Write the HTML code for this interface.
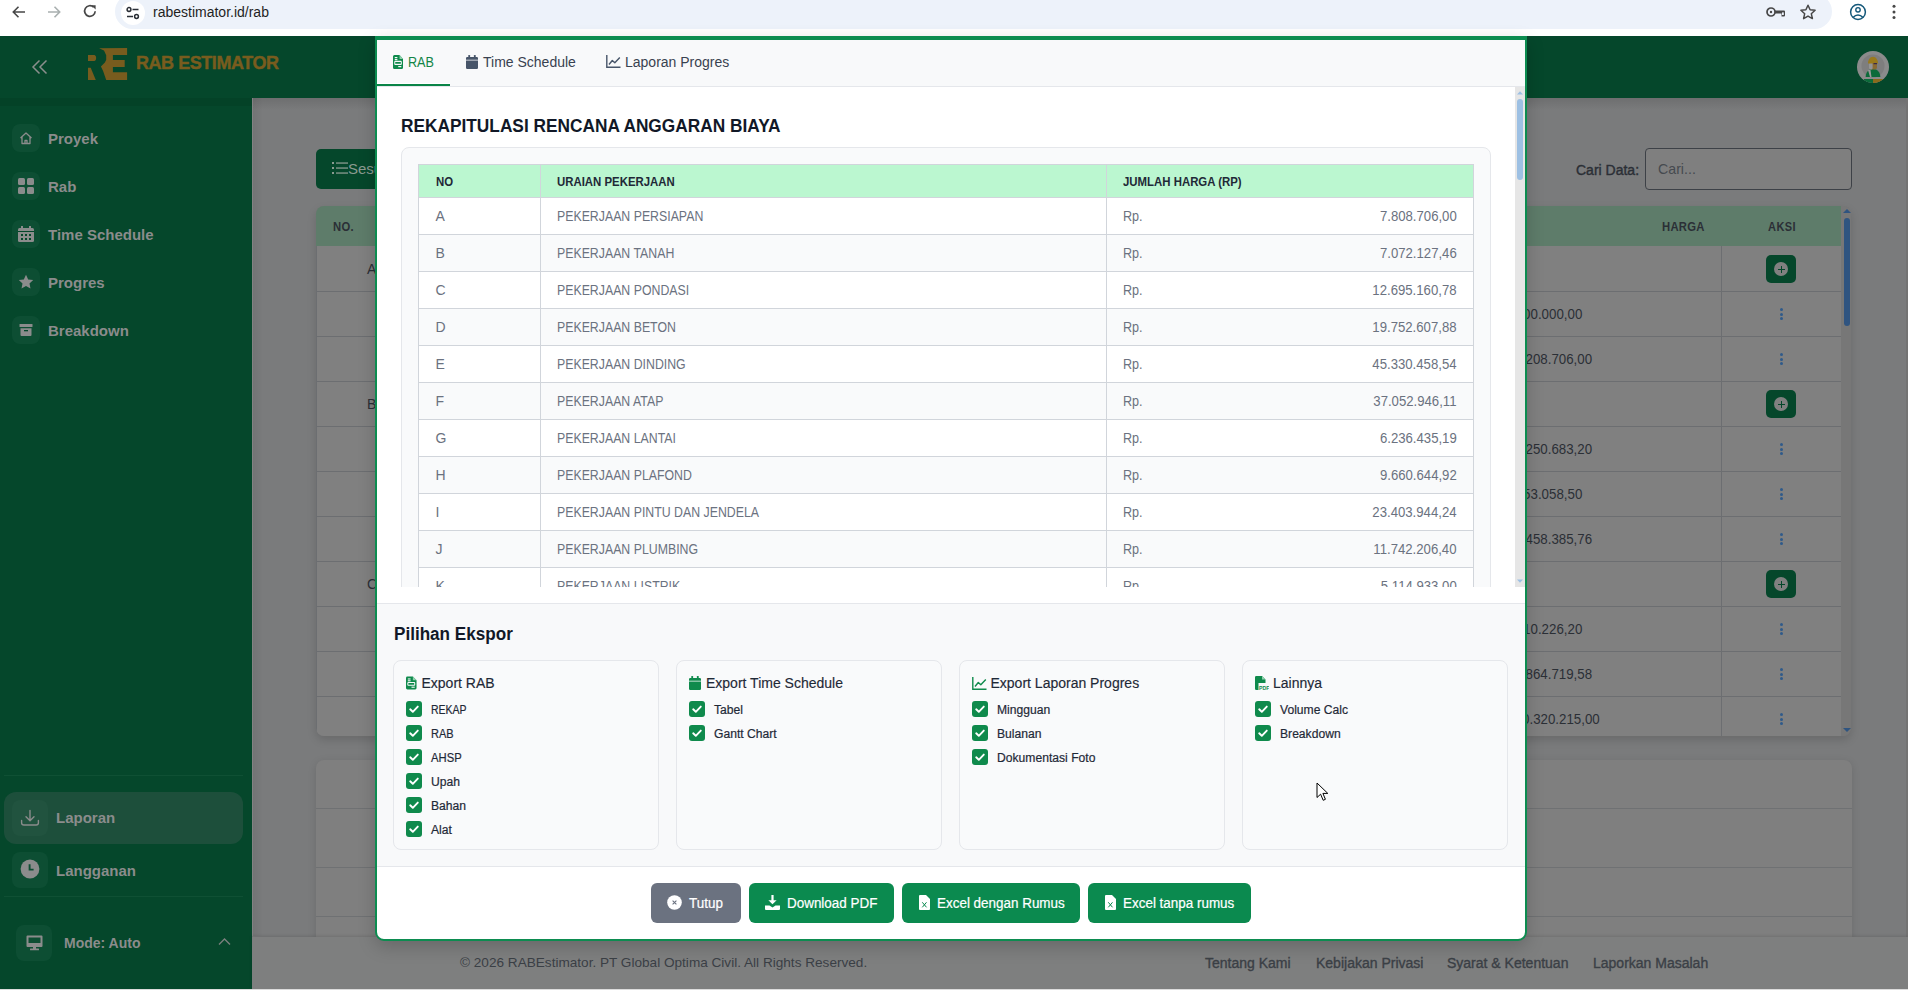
<!DOCTYPE html><html><head><meta charset="utf-8"><style>
*{box-sizing:border-box;margin:0;padding:0}
html,body{width:1908px;height:990px;overflow:hidden;font-family:"Liberation Sans",sans-serif;background:#7a7b7c}
.a{position:absolute}
.nw{white-space:nowrap}
svg{display:block}
/* sidebar */
.ib{position:absolute;width:28px;height:28px;border-radius:8px;background:#0d4e33}
.nt{position:absolute;font-size:15px;line-height:15px;font-weight:bold;color:#8b8c8c;white-space:nowrap}
/* bg table */
.brow{position:absolute;left:317px;width:1524px;height:45px;border-bottom:1px solid #6c6e71;background:#808080}
.bval{position:absolute;font-size:14px;line-height:14px;color:#2b2f36;white-space:nowrap;text-align:right}
.dots{position:absolute;left:1780px;width:3px}
.dots i{display:block;width:3px;height:3px;border-radius:2px;background:#2f5a8a;margin-bottom:1.6px}
.plus{position:absolute;left:1766px;width:30px;height:28px;border-radius:5px;background:#05472b}
.plus b{position:absolute;left:8px;top:7px;width:14px;height:14px;border-radius:7px;background:#808080}
.plus b:before{content:"";position:absolute;left:6.5px;top:3.5px;width:1px;height:7px;background:#05472b}
.plus b:after{content:"";position:absolute;left:3.5px;top:6.5px;width:7px;height:1px;background:#05472b}
/* modal */
#modal{left:375px;top:36px;width:1152px;height:905px;background:#fff;border:2px solid #0c8c50;border-top-width:4px;border-radius:0 0 9px 9px;overflow:hidden}
</style></head><body>
<div class="a" style="left:0;top:0;width:1908px;height:36px;background:#fff"></div>
<div class="a" style="left:115px;top:-6px;width:1717px;height:35px;border-radius:18px;background:#edf2fa"></div>
<div class="a" style="left:121px;top:1px;width:24px;height:24px;border-radius:12px;background:#fff"></div>
<div class="a nw" style="left:153px;top:4px;font-size:14px;line-height:16px;color:#1f1f1f">rabestimator.id/rab</div>

<svg class="a" style="left:8.5px;top:2px" width="20" height="20" viewBox="0 0 20 20"><path d="M16 10H4.5M9.5 4.8L4.3 10l5.2 5.2" fill="none" stroke="#474747" stroke-width="1.6"/></svg>
<svg class="a" style="left:44px;top:2px" width="20" height="20" viewBox="0 0 20 20"><path d="M4 10h11.5M10.5 4.8l5.2 5.2-5.2 5.2" fill="none" stroke="#a9b0b0" stroke-width="1.6"/></svg>
<svg class="a" style="left:80px;top:1px" width="20" height="20" viewBox="0 0 20 20"><path d="M15.2 10.3A5.3 5.3 0 1 1 13.6 6.2" fill="none" stroke="#474747" stroke-width="1.7"/><path d="M11.2 4.2h4.4v4.4z" fill="#474747"/></svg>
<svg class="a" style="left:125px;top:5px" width="16" height="16" viewBox="0 0 16 16"><circle cx="4" cy="4.5" r="1.9" fill="none" stroke="#2a2f36" stroke-width="1.5"/><path d="M7.5 4.5h6M2 11.5h6" stroke="#2a2f36" stroke-width="1.5"/><circle cx="11.5" cy="11.5" r="1.9" fill="none" stroke="#2a2f36" stroke-width="1.5"/></svg>

<svg class="a" style="left:1766px;top:6px" width="20" height="12" viewBox="0 0 20 12"><circle cx="5" cy="6" r="4" fill="none" stroke="#474747" stroke-width="1.7"/><circle cx="5" cy="6" r="1.2" fill="#474747"/><path d="M9 4.6H18A1 1 0 0 1 19 5.6V9.5A1 1 0 0 1 18 10.5H15.5V7.4H9Z" fill="#474747"/><rect x="16" y="6.4" width="1.8" height="2.6" fill="#edf2fa"/></svg>
<svg class="a" style="left:1799px;top:4px" width="18" height="16" viewBox="0 0 18 16"><path d="M9 1.2l2.1 4.6 5 .5-3.8 3.4 1.1 4.9L9 12.1l-4.4 2.5 1.1-4.9L1.9 6.3l5-.5z" fill="none" stroke="#474747" stroke-width="1.5" stroke-linejoin="round"/></svg>
<svg class="a" style="left:1849px;top:3px" width="18" height="18" viewBox="0 0 18 18"><circle cx="9" cy="9" r="7.4" fill="none" stroke="#14587a" stroke-width="1.5"/><circle cx="9" cy="6.8" r="2.2" fill="none" stroke="#14587a" stroke-width="1.4"/><path d="M4.3 14.3c1.3-1.6 2.8-2.3 4.7-2.3s3.4.7 4.7 2.3" fill="none" stroke="#14587a" stroke-width="1.4"/></svg>
<svg class="a" style="left:1891px;top:3px" width="6" height="18" viewBox="0 0 6 18"><circle cx="3" cy="3.2" r="1.5" fill="#474747"/><circle cx="3" cy="9" r="1.5" fill="#474747"/><circle cx="3" cy="14.5" r="1.5" fill="#474747"/></svg>

<div class="a" style="left:0;top:36px;width:1908px;height:62px;background:#05472b"></div>
<svg class="a" style="left:30px;top:57px" width="20" height="20" viewBox="0 0 20 20"><path d="M9.5 3.5L3 10l6.5 6.5M16.5 3.5L10 10l6.5 6.5" fill="none" stroke="#8b8f8d" stroke-width="1.5"/></svg>
<svg class="a" style="left:80px;top:42px" width="55" height="44" viewBox="80 42 55 44">
<path d="M99.1 48.2L127.1 48V55.1H112.9V60H124.7V66.9H112.9V72.2H127.1V80H106.2L103.1 70.9L100.9 66.4L104.9 62.4L106.2 59.8V55.3L104 50.4Z" fill="#785c1e"/>
<path d="M88 55H94.5Q96.2 55.4 96.2 58Q96.2 60.6 94.5 61H88Z" fill="#785c1e"/>
<path d="M88 67.8H90.7L95.8 80H88Z" fill="#785c1e"/>
</svg>
<div class="a nw" style="left:136px;top:53px;font-size:18px;line-height:20px;font-weight:bold;color:#785c1e;letter-spacing:-0.45px;-webkit-text-stroke:.45px #785c1e">RAB ESTIMATOR</div>
<svg class="a" style="left:1856px;top:50px" width="34" height="34" viewBox="0 0 34 34">
<defs><clipPath id="avc"><circle cx="17" cy="17" r="16"/></clipPath></defs>
<circle cx="17" cy="17" r="16" fill="#8b8b8b"/><circle cx="17" cy="16" r="11.5" fill="#7e7e7e"/>
<g clip-path="url(#avc)">
<path d="M9.6 27c.3-5 2.8-8 7.4-8s7 3 7.4 8z" fill="#0b6b3a"/>
<path d="M12 20l2 7h1.5l-1-7z" fill="#9a9a9a"/>
<rect x="13" y="12.5" width="8" height="7" rx="2.5" fill="#8a6a34"/>
<rect x="13" y="12.5" width="3.6" height="7" rx="1.5" fill="#949494"/>
<path d="M12 13.5c0-4 2.2-6.8 5-6.8s5 2.8 5 6.8z" fill="#9a7a1c"/>
<rect x="17.5" y="13" width="3.5" height="1.2" fill="#3a2a4a"/>
<path d="M8 29h9v5H8z" fill="#0b6b3a"/><path d="M17 29h10v5H17z" fill="#8a6a1c"/>
</g>
</svg>
<div class="a" style="left:0;top:98px;width:252px;height:892px;background:#05472b"></div>
<div class="a" style="left:0;top:98px;width:252px;height:8px;background:rgba(0,0,0,.07)"></div>
<div class="a" style="left:252px;top:98px;width:1656px;height:12px;background:linear-gradient(rgba(0,0,0,.10),rgba(0,0,0,0))"></div>
<div class="a" style="left:253px;top:98px;width:10px;height:838px;background:linear-gradient(90deg,rgba(0,0,0,.06),rgba(0,0,0,0))"></div>
<div class="a" style="left:252px;top:98px;width:1px;height:838px;background:#838383"></div>
<div class="ib" style="left:12px;top:124px"></div>
<svg class="a" style="left:18px;top:130px" width="16" height="16" viewBox="0 0 16 16"><path d="M2.5 8L8 3l5.5 5M4 7v6.5h8V7M7 13.5v-3h2v3" fill="none" stroke="#8b8c8c" stroke-width="1.3" stroke-linejoin="round"/></svg>
<div class="nt" style="left:48px;top:131px">Proyek</div>
<div class="ib" style="left:12px;top:172px"></div>
<svg class="a" style="left:18px;top:178px" width="16" height="16" viewBox="0 0 16 16"><rect x="0" y="0" width="7" height="7" rx="1.5" fill="#8b8c8c"/><rect x="9" y="0" width="7" height="7" rx="1.5" fill="#8b8c8c"/><rect x="0" y="9" width="7" height="7" rx="1.5" fill="#8b8c8c"/><rect x="9" y="9" width="7" height="7" rx="1.5" fill="#8b8c8c"/></svg>
<div class="nt" style="left:48px;top:179px">Rab</div>
<div class="ib" style="left:12px;top:220px"></div>
<svg class="a" style="left:18px;top:226px" width="16" height="16" viewBox="0 0 16 16"><rect x="0" y="2" width="16" height="14" rx="1.5" fill="#8b8c8c"/><rect x="3" y="0" width="2" height="4" fill="#8b8c8c"/><rect x="11" y="0" width="2" height="4" fill="#8b8c8c"/><path d="M0 5.5h16" stroke="#05472b" stroke-width="1"/><g fill="#05472b"><rect x="3" y="8" width="2" height="2"/><rect x="7" y="8" width="2" height="2"/><rect x="11" y="8" width="2" height="2"/><rect x="3" y="12" width="2" height="2"/><rect x="7" y="12" width="2" height="2"/><rect x="11" y="12" width="2" height="2"/></g></svg>
<div class="nt" style="left:48px;top:227px">Time Schedule</div>
<div class="ib" style="left:12px;top:268px"></div>
<svg class="a" style="left:18px;top:274px" width="16" height="16" viewBox="0 0 16 16"><path d="M8 .8l2.2 4.6 5 .6-3.7 3.4 1 5L8 11.9l-4.5 2.5 1-5L.8 6l5-.6z" fill="#8b8c8c"/></svg>
<div class="nt" style="left:48px;top:275px">Progres</div>
<div class="ib" style="left:12px;top:316px"></div>
<svg class="a" style="left:18px;top:322px" width="16" height="16" viewBox="0 0 16 16"><rect x="1.5" y="2" width="13" height="3" rx=".5" fill="#8b8c8c"/><path d="M2.5 6.2h11V13a1 1 0 0 1-1 1h-9a1 1 0 0 1-1-1z" fill="#8b8c8c"/><rect x="6" y="8" width="4" height="1.3" fill="#05472b"/></svg>
<div class="nt" style="left:48px;top:323px">Breakdown</div>
<div class="a" style="left:4px;top:775px;width:239px;height:1px;background:#0f5034"></div>
<div class="a" style="left:4px;top:792px;width:239px;height:52px;border-radius:12px;background:#1d4f3b"></div>
<div class="a" style="left:12px;top:800px;width:36px;height:36px;border-radius:8px;background:#21533f"></div>
<svg class="a" style="left:20px;top:809px" width="20" height="18" viewBox="0 0 20 18"><path d="M10 1.5v10M6 7.8l4 4 4-4M1.6 11.5v2.2a2.3 2.3 0 0 0 2.3 2.3h12.2a2.3 2.3 0 0 0 2.3-2.3v-2.2" fill="none" stroke="#8b8c8c" stroke-width="1.4" stroke-linecap="round" stroke-linejoin="round"/></svg>
<div class="nt" style="left:56px;top:810.3px">Laporan</div>
<div class="a" style="left:12px;top:852px;width:36px;height:36px;border-radius:8px;background:#0d4e33"></div>
<svg class="a" style="left:20px;top:859px" width="20" height="20" viewBox="0 0 20 20"><circle cx="10" cy="10" r="9.4" fill="#8b8c8c"/><path d="M9.6 5.2v5.4h4" fill="none" stroke="#0d4e33" stroke-width="1.9"/></svg>
<div class="nt" style="left:56px;top:863px">Langganan</div>
<div class="a" style="left:4px;top:896px;width:239px;height:1px;background:#0f5034"></div>
<div class="a" style="left:16px;top:925px;width:36px;height:36px;border-radius:8px;background:#0d4e33"></div>
<svg class="a" style="left:26px;top:935px" width="17" height="16" viewBox="0 0 17 16"><path d="M1.5 .5H15.5A1 1 0 0 1 16.5 1.5V11A1 1 0 0 1 15.5 12H1.5A1 1 0 0 1 .5 11V1.5A1 1 0 0 1 1.5 .5ZM2.5 2.5V8H14.5V2.5Z" fill="#8b8c8c" fill-rule="evenodd"/><rect x="7" y="12" width="3" height="2" fill="#8b8c8c"/><rect x="4" y="13.5" width="9" height="1.8" rx=".5" fill="#8b8c8c"/></svg>
<div class="nt" style="left:64px;top:936px;font-size:14px;line-height:14px">Mode: Auto</div>
<svg class="a" style="left:218px;top:937px" width="13" height="9" viewBox="0 0 13 9"><path d="M1 7.5L6.5 2 12 7.5" fill="none" stroke="#7c807e" stroke-width="1.4"/></svg>
<div class="a" style="left:316px;top:149px;width:120px;height:40px;border-radius:5px;background:#05472b"></div>
<svg class="a" style="left:332px;top:161px" width="16" height="14" viewBox="0 0 16 14"><g fill="#8a9a90"><rect x="0" y="1" width="2" height="2"/><rect x="0" y="6" width="2" height="2"/><rect x="0" y="11" width="2" height="2"/><rect x="4" y="1.4" width="12" height="1.3"/><rect x="4" y="6.4" width="12" height="1.3"/><rect x="4" y="11.4" width="12" height="1.3"/></g></svg>
<div class="a nw" style="left:348px;top:161px;font-size:15px;line-height:16px;color:#8a9a90">Sesuaikan</div>
<div class="a nw" style="left:1576px;top:161.5px;font-size:14px;line-height:16px;color:#2b2f36;-webkit-text-stroke:.4px #2b2f36">Cari Data:</div>
<div class="a" style="left:1645px;top:148px;width:207px;height:42px;border:1px solid #3d4147;border-radius:4px;background:#7f7f7f"></div>
<div class="a nw" style="left:1658px;top:161px;font-size:14.2px;line-height:16px;color:#464a4f">Cari...</div>
<div class="a" style="left:316px;top:206px;width:1535px;height:530px;border-radius:8px;overflow:hidden;background:#777777;box-shadow:0 4px 10px rgba(0,0,0,.14)">
<div class="a" style="left:0;top:0;width:1526px;height:40px;background:#5e7c6a"></div>
<div class="a" style="left:0;top:40px;width:1526px;height:490px;background:#808080;border-left:1px solid #6c6e71;border-right:1px solid #6c6e71"></div>
<div class="a" style="left:0;top:85px;width:1526px;height:1px;background:#6c6e71"></div>
<div class="a" style="left:0;top:130px;width:1526px;height:1px;background:#6c6e71"></div>
<div class="a" style="left:0;top:175px;width:1526px;height:1px;background:#6c6e71"></div>
<div class="a" style="left:0;top:220px;width:1526px;height:1px;background:#6c6e71"></div>
<div class="a" style="left:0;top:265px;width:1526px;height:1px;background:#6c6e71"></div>
<div class="a" style="left:0;top:310px;width:1526px;height:1px;background:#6c6e71"></div>
<div class="a" style="left:0;top:355px;width:1526px;height:1px;background:#6c6e71"></div>
<div class="a" style="left:0;top:400px;width:1526px;height:1px;background:#6c6e71"></div>
<div class="a" style="left:0;top:445px;width:1526px;height:1px;background:#6c6e71"></div>
<div class="a" style="left:0;top:490px;width:1526px;height:1px;background:#6c6e71"></div>
<div class="a" style="left:0;top:535px;width:1526px;height:1px;background:#6c6e71"></div>
<div class="a" style="left:1405px;top:40px;width:1px;height:490px;background:#6c6e71"></div>
</div>
<div class="a nw" style="left:333px;top:219.8px;font-size:12.5px;line-height:14px;font-weight:bold;color:#2b2f36;letter-spacing:0.3px;transform:scaleX(.9);transform-origin:0 0">NO.</div>
<div class="a nw" style="left:1662px;top:219.8px;font-size:12.5px;line-height:14px;font-weight:bold;color:#2b2f36;letter-spacing:0.3px;transform:scaleX(.9);transform-origin:0 0">HARGA</div>
<div class="a nw" style="left:1768px;top:219.8px;font-size:12.5px;line-height:14px;font-weight:bold;color:#2b2f36;letter-spacing:0.5px;transform:scaleX(.88);transform-origin:0 0">AKSI</div>
<div class="bval" style="left:367px;top:262px">A</div>
<div class="plus" style="top:255px"><b></b></div>
<div class="dots" style="top:308px"><i></i><i></i><i></i></div>
<div class="bval" style="right:326px;top:307px;transform:scaleX(.95);transform-origin:100% 0">00.000,00</div>
<div class="dots" style="top:353px"><i></i><i></i><i></i></div>
<div class="bval" style="right:316px;top:352px;transform:scaleX(.95);transform-origin:100% 0">208.706,00</div>
<div class="bval" style="left:367px;top:397px">B</div>
<div class="plus" style="top:390px"><b></b></div>
<div class="dots" style="top:443px"><i></i><i></i><i></i></div>
<div class="bval" style="right:316px;top:442px;transform:scaleX(.95);transform-origin:100% 0">250.683,20</div>
<div class="dots" style="top:488px"><i></i><i></i><i></i></div>
<div class="bval" style="right:326px;top:487px;transform:scaleX(.95);transform-origin:100% 0">53.058,50</div>
<div class="dots" style="top:533px"><i></i><i></i><i></i></div>
<div class="bval" style="right:316px;top:532px;transform:scaleX(.95);transform-origin:100% 0">458.385,76</div>
<div class="bval" style="left:367px;top:577px">C</div>
<div class="plus" style="top:570px"><b></b></div>
<div class="dots" style="top:623px"><i></i><i></i><i></i></div>
<div class="bval" style="right:326px;top:622px;transform:scaleX(.95);transform-origin:100% 0">10.226,20</div>
<div class="dots" style="top:668px"><i></i><i></i><i></i></div>
<div class="bval" style="right:316px;top:667px;transform:scaleX(.95);transform-origin:100% 0">864.719,58</div>
<div class="dots" style="top:713px"><i></i><i></i><i></i></div>
<div class="bval" style="right:308px;top:712px;transform:scaleX(.95);transform-origin:100% 0">0.320.215,00</div>
<div class="a" style="left:1841px;top:206px;width:10px;height:530px;background:#777;border-radius:0 8px 8px 0"></div>
<div class="a" style="left:1844px;top:218px;width:6px;height:108px;border-radius:3px;background:#2f5480"></div>
<svg class="a" style="left:1843px;top:208px" width="8" height="6" viewBox="0 0 8 6"><path d="M0 5L4 1l4 4z" fill="#2f5480"/></svg>
<svg class="a" style="left:1843px;top:727px" width="8" height="6" viewBox="0 0 8 6"><path d="M0 1l4 4 4-4z" fill="#2f5480"/></svg>
<div class="a" style="left:316px;top:760px;width:1536px;height:180px;border-radius:8px 8px 0 0;background:#7f7f7f;box-shadow:0 2px 8px rgba(0,0,0,.12)"></div>
<div class="a" style="left:316px;top:808px;width:1536px;height:1px;background:#6f7173"></div>
<div class="a" style="left:316px;top:867px;width:1536px;height:1px;background:#6f7173"></div>
<div class="a" style="left:316px;top:916px;width:1536px;height:1px;background:#6f7173"></div>
<div class="a" style="left:1906px;top:98px;width:2px;height:892px;background:#737373"></div>
<div class="a" style="left:252px;top:937px;width:1656px;height:52px;background:#7e7f7f;box-shadow:0 -1px 3px rgba(0,0,0,.12)"></div>
<div class="a nw" style="left:460px;top:955px;font-size:13.6px;line-height:16px;color:#3b4046">© 2026 RABEstimator. PT Global Optima Civil. All Rights Reserved.</div>
<div class="a nw" style="left:1205px;top:955px;font-size:14px;line-height:16px;color:#3b4046;-webkit-text-stroke:.35px #3b4046">Tentang Kami</div>
<div class="a nw" style="left:1316px;top:955px;font-size:14px;line-height:16px;color:#3b4046;-webkit-text-stroke:.35px #3b4046">Kebijakan Privasi</div>
<div class="a nw" style="left:1447px;top:955px;font-size:14px;line-height:16px;color:#3b4046;-webkit-text-stroke:.35px #3b4046">Syarat &amp; Ketentuan</div>
<div class="a nw" style="left:1593px;top:955px;font-size:14px;line-height:16px;color:#3b4046;-webkit-text-stroke:.35px #3b4046">Laporkan Masalah</div>
<div class="a" style="left:0;top:989px;width:1908px;height:1px;background:#dcdcdc"></div>
<div class="a" style="left:375px;top:36px;width:1152px;height:905px;background:#fff;border:2px solid #0c8c50;border-top-width:4px;border-radius:0 0 9px 9px;overflow:hidden;box-shadow:0 6px 18px rgba(0,0,0,.18)"></div>
<div class="a" style="left:377px;top:40px;width:1148px;height:46px;background:#f8f9fa"></div>
<div class="a" style="left:377px;top:86px;width:1148px;height:1px;background:#e5e7eb"></div>
<div class="a" style="left:377px;top:83px;width:73px;height:1px;background:#fff"></div>
<div class="a" style="left:377px;top:84px;width:73px;height:2px;background:#0a8447"></div>
<svg class="a" style="left:392.8px;top:55px" width="10.5" height="14" viewBox="0 0 12 14" preserveAspectRatio="none"><path d="M1.5 0H7.5L11.5 4V12.5A1.5 1.5 0 0 1 10 14H1.5A1.5 1.5 0 0 1 0 12.5V1.5A1.5 1.5 0 0 1 1.5 0Z" fill="#0f8a4c"/><path d="M7.5 0V4H11.5" fill="#8fd1ad"/><rect x="2" y="2" width="3" height="1.2" fill="#f8f9fa"/><rect x="2" y="4" width="3" height="1.2" fill="#f8f9fa"/><rect x="2" y="6.4" width="7.5" height="3" rx=".5" fill="none" stroke="#f8f9fa" stroke-width="1.1"/><rect x="6" y="11" width="3.5" height="1.2" fill="#f8f9fa"/></svg>
<div class="a nw" style="left:408px;top:54px;font-size:14px;line-height:16px;color:#138546;transform:scaleX(.9);transform-origin:0 0">RAB</div>
<svg class="a" style="left:466px;top:55px" width="12" height="14" viewBox="0 0 12 14"><rect x="2.3" y="0" width="1.8" height="3" rx=".6" fill="#475569"/><rect x="7.9" y="0" width="1.8" height="3" rx=".6" fill="#475569"/><path d="M0 3.2A1.2 1.2 0 0 1 1.2 2H10.8A1.2 1.2 0 0 1 12 3.2V4.8H0Z" fill="#475569"/><path d="M0 5.6H12V12.8A1.2 1.2 0 0 1 10.8 14H1.2A1.2 1.2 0 0 1 0 12.8Z" fill="#475569"/></svg>
<div class="a nw" style="left:483px;top:54px;font-size:14px;line-height:16px;color:#384250">Time Schedule</div>
<svg class="a" style="left:606px;top:55px" width="15" height="13" viewBox="0 0 15 13"><path d="M.8 0V12.2H14.5" fill="none" stroke="#475569" stroke-width="1.4"/><path d="M3 9.5L6.3 5.5 8.8 7.8 13.8 2.5" fill="none" stroke="#475569" stroke-width="1.4" stroke-linejoin="round"/></svg>
<div class="a nw" style="left:625px;top:54px;font-size:14px;line-height:16px;color:#384250">Laporan Progres</div>
<div class="a" style="left:377px;top:87px;width:1138px;height:500px;overflow:hidden;background:#fff">
<div class="a nw" style="left:24px;top:28.5px;font-size:18px;line-height:20px;font-weight:bold;color:#111827;transform:scaleX(.96);transform-origin:0 0">REKAPITULASI RENCANA ANGGARAN BIAYA</div>
<div class="a" style="left:24px;top:60px;width:1090px;height:600px;border:1px solid #e5e7eb;border-radius:8px;background:#f9fafb"></div>
<div class="a" style="left:41px;top:77px;width:1056px;height:34px;background:#bbf7d0;border:1px solid #d1d5db"></div>
<div class="a nw" style="left:58.5px;top:87.5px;font-size:12px;line-height:14px;font-weight:bold;color:#1f2937;transform:scaleX(.95);transform-origin:0 0">NO</div>
<div class="a nw" style="left:179.8px;top:87.5px;font-size:12px;line-height:14px;font-weight:bold;color:#1f2937;transform:scaleX(.95);transform-origin:0 0">URAIAN PEKERJAAN</div>
<div class="a nw" style="left:746.2px;top:87.5px;font-size:12px;line-height:14px;font-weight:bold;color:#1f2937;transform:scaleX(.95);transform-origin:0 0">JUMLAH HARGA (RP)</div>
<div class="a" style="left:41px;top:110px;width:1056px;height:38px;background:#fff;border:1px solid #d1d5db"></div>
<div class="a nw" style="left:58.5px;top:120.5px;font-size:14px;line-height:16px;color:#6b7280">A</div>
<div class="a nw" style="left:179.8px;top:120.5px;font-size:14px;line-height:16px;color:#6b7280;transform:scaleX(.88);transform-origin:0 0">PEKERJAAN PERSIAPAN</div>
<div class="a nw" style="left:746.2px;top:120.5px;font-size:14px;line-height:16px;color:#6b7280;transform:scaleX(.9);transform-origin:0 0">Rp.</div>
<div class="a nw" style="right:58.4px;top:120.5px;font-size:14px;line-height:16px;color:#6b7280;transform:scaleX(.94);transform-origin:100% 0">7.808.706,00</div>
<div class="a" style="left:41px;top:147px;width:1056px;height:38px;background:#f9fafb;border:1px solid #d1d5db"></div>
<div class="a nw" style="left:58.5px;top:157.5px;font-size:14px;line-height:16px;color:#6b7280">B</div>
<div class="a nw" style="left:179.8px;top:157.5px;font-size:14px;line-height:16px;color:#6b7280;transform:scaleX(.88);transform-origin:0 0">PEKERJAAN TANAH</div>
<div class="a nw" style="left:746.2px;top:157.5px;font-size:14px;line-height:16px;color:#6b7280;transform:scaleX(.9);transform-origin:0 0">Rp.</div>
<div class="a nw" style="right:58.4px;top:157.5px;font-size:14px;line-height:16px;color:#6b7280;transform:scaleX(.94);transform-origin:100% 0">7.072.127,46</div>
<div class="a" style="left:41px;top:184px;width:1056px;height:38px;background:#fff;border:1px solid #d1d5db"></div>
<div class="a nw" style="left:58.5px;top:194.5px;font-size:14px;line-height:16px;color:#6b7280">C</div>
<div class="a nw" style="left:179.8px;top:194.5px;font-size:14px;line-height:16px;color:#6b7280;transform:scaleX(.88);transform-origin:0 0">PEKERJAAN PONDASI</div>
<div class="a nw" style="left:746.2px;top:194.5px;font-size:14px;line-height:16px;color:#6b7280;transform:scaleX(.9);transform-origin:0 0">Rp.</div>
<div class="a nw" style="right:58.4px;top:194.5px;font-size:14px;line-height:16px;color:#6b7280;transform:scaleX(.94);transform-origin:100% 0">12.695.160,78</div>
<div class="a" style="left:41px;top:221px;width:1056px;height:38px;background:#f9fafb;border:1px solid #d1d5db"></div>
<div class="a nw" style="left:58.5px;top:231.5px;font-size:14px;line-height:16px;color:#6b7280">D</div>
<div class="a nw" style="left:179.8px;top:231.5px;font-size:14px;line-height:16px;color:#6b7280;transform:scaleX(.88);transform-origin:0 0">PEKERJAAN BETON</div>
<div class="a nw" style="left:746.2px;top:231.5px;font-size:14px;line-height:16px;color:#6b7280;transform:scaleX(.9);transform-origin:0 0">Rp.</div>
<div class="a nw" style="right:58.4px;top:231.5px;font-size:14px;line-height:16px;color:#6b7280;transform:scaleX(.94);transform-origin:100% 0">19.752.607,88</div>
<div class="a" style="left:41px;top:258px;width:1056px;height:38px;background:#fff;border:1px solid #d1d5db"></div>
<div class="a nw" style="left:58.5px;top:268.5px;font-size:14px;line-height:16px;color:#6b7280">E</div>
<div class="a nw" style="left:179.8px;top:268.5px;font-size:14px;line-height:16px;color:#6b7280;transform:scaleX(.88);transform-origin:0 0">PEKERJAAN DINDING</div>
<div class="a nw" style="left:746.2px;top:268.5px;font-size:14px;line-height:16px;color:#6b7280;transform:scaleX(.9);transform-origin:0 0">Rp.</div>
<div class="a nw" style="right:58.4px;top:268.5px;font-size:14px;line-height:16px;color:#6b7280;transform:scaleX(.94);transform-origin:100% 0">45.330.458,54</div>
<div class="a" style="left:41px;top:295px;width:1056px;height:38px;background:#f9fafb;border:1px solid #d1d5db"></div>
<div class="a nw" style="left:58.5px;top:305.5px;font-size:14px;line-height:16px;color:#6b7280">F</div>
<div class="a nw" style="left:179.8px;top:305.5px;font-size:14px;line-height:16px;color:#6b7280;transform:scaleX(.88);transform-origin:0 0">PEKERJAAN ATAP</div>
<div class="a nw" style="left:746.2px;top:305.5px;font-size:14px;line-height:16px;color:#6b7280;transform:scaleX(.9);transform-origin:0 0">Rp.</div>
<div class="a nw" style="right:58.4px;top:305.5px;font-size:14px;line-height:16px;color:#6b7280;transform:scaleX(.94);transform-origin:100% 0">37.052.946,11</div>
<div class="a" style="left:41px;top:332px;width:1056px;height:38px;background:#fff;border:1px solid #d1d5db"></div>
<div class="a nw" style="left:58.5px;top:342.5px;font-size:14px;line-height:16px;color:#6b7280">G</div>
<div class="a nw" style="left:179.8px;top:342.5px;font-size:14px;line-height:16px;color:#6b7280;transform:scaleX(.88);transform-origin:0 0">PEKERJAAN LANTAI</div>
<div class="a nw" style="left:746.2px;top:342.5px;font-size:14px;line-height:16px;color:#6b7280;transform:scaleX(.9);transform-origin:0 0">Rp.</div>
<div class="a nw" style="right:58.4px;top:342.5px;font-size:14px;line-height:16px;color:#6b7280;transform:scaleX(.94);transform-origin:100% 0">6.236.435,19</div>
<div class="a" style="left:41px;top:369px;width:1056px;height:38px;background:#f9fafb;border:1px solid #d1d5db"></div>
<div class="a nw" style="left:58.5px;top:379.5px;font-size:14px;line-height:16px;color:#6b7280">H</div>
<div class="a nw" style="left:179.8px;top:379.5px;font-size:14px;line-height:16px;color:#6b7280;transform:scaleX(.88);transform-origin:0 0">PEKERJAAN PLAFOND</div>
<div class="a nw" style="left:746.2px;top:379.5px;font-size:14px;line-height:16px;color:#6b7280;transform:scaleX(.9);transform-origin:0 0">Rp.</div>
<div class="a nw" style="right:58.4px;top:379.5px;font-size:14px;line-height:16px;color:#6b7280;transform:scaleX(.94);transform-origin:100% 0">9.660.644,92</div>
<div class="a" style="left:41px;top:406px;width:1056px;height:38px;background:#fff;border:1px solid #d1d5db"></div>
<div class="a nw" style="left:58.5px;top:416.5px;font-size:14px;line-height:16px;color:#6b7280">I</div>
<div class="a nw" style="left:179.8px;top:416.5px;font-size:14px;line-height:16px;color:#6b7280;transform:scaleX(.88);transform-origin:0 0">PEKERJAAN PINTU DAN JENDELA</div>
<div class="a nw" style="left:746.2px;top:416.5px;font-size:14px;line-height:16px;color:#6b7280;transform:scaleX(.9);transform-origin:0 0">Rp.</div>
<div class="a nw" style="right:58.4px;top:416.5px;font-size:14px;line-height:16px;color:#6b7280;transform:scaleX(.94);transform-origin:100% 0">23.403.944,24</div>
<div class="a" style="left:41px;top:443px;width:1056px;height:38px;background:#f9fafb;border:1px solid #d1d5db"></div>
<div class="a nw" style="left:58.5px;top:453.5px;font-size:14px;line-height:16px;color:#6b7280">J</div>
<div class="a nw" style="left:179.8px;top:453.5px;font-size:14px;line-height:16px;color:#6b7280;transform:scaleX(.88);transform-origin:0 0">PEKERJAAN PLUMBING</div>
<div class="a nw" style="left:746.2px;top:453.5px;font-size:14px;line-height:16px;color:#6b7280;transform:scaleX(.9);transform-origin:0 0">Rp.</div>
<div class="a nw" style="right:58.4px;top:453.5px;font-size:14px;line-height:16px;color:#6b7280;transform:scaleX(.94);transform-origin:100% 0">11.742.206,40</div>
<div class="a" style="left:41px;top:480px;width:1056px;height:38px;background:#fff;border:1px solid #d1d5db"></div>
<div class="a nw" style="left:58.5px;top:490.5px;font-size:14px;line-height:16px;color:#6b7280">K</div>
<div class="a nw" style="left:179.8px;top:490.5px;font-size:14px;line-height:16px;color:#6b7280;transform:scaleX(.88);transform-origin:0 0">PEKERJAAN LISTRIK</div>
<div class="a nw" style="left:746.2px;top:490.5px;font-size:14px;line-height:16px;color:#6b7280;transform:scaleX(.9);transform-origin:0 0">Rp.</div>
<div class="a nw" style="right:58.4px;top:490.5px;font-size:14px;line-height:16px;color:#6b7280;transform:scaleX(.94);transform-origin:100% 0">5.114.933,00</div>
<div class="a" style="left:41px;top:517px;width:1056px;height:38px;background:#f9fafb;border:1px solid #d1d5db"></div>
<div class="a nw" style="left:58.5px;top:527.5px;font-size:14px;line-height:16px;color:#6b7280">L</div>
<div class="a nw" style="left:179.8px;top:527.5px;font-size:14px;line-height:16px;color:#6b7280;transform:scaleX(.88);transform-origin:0 0">PEKERJAAN FINISHING</div>
<div class="a nw" style="left:746.2px;top:527.5px;font-size:14px;line-height:16px;color:#6b7280;transform:scaleX(.9);transform-origin:0 0">Rp.</div>
<div class="a nw" style="right:58.4px;top:527.5px;font-size:14px;line-height:16px;color:#6b7280;transform:scaleX(.94);transform-origin:100% 0">8.000.000,00</div>
<div class="a" style="left:163px;top:77px;width:1px;height:500px;background:#d1d5db"></div>
<div class="a" style="left:729px;top:77px;width:1px;height:500px;background:#d1d5db"></div>
</div>
<div class="a" style="left:1515px;top:87px;width:10px;height:500px;background:#e6e6e6"></div>
<svg class="a" style="left:1517px;top:90px" width="6" height="5" viewBox="0 0 6 5"><path d="M0 4.5L3 1.2 6 4.5z" fill="#9dc0e3"/></svg>
<div class="a" style="left:1517px;top:99px;width:6px;height:81px;border-radius:3px;background:#9dc0e3"></div>
<svg class="a" style="left:1517px;top:579px" width="6" height="5" viewBox="0 0 6 5"><path d="M0 .5L3 3.8 6 .5z" fill="#9dc0e3"/></svg>
<div class="a" style="left:377px;top:603px;width:1148px;height:1px;background:#e5e7eb"></div>
<div class="a" style="left:377px;top:604px;width:1148px;height:262px;background:#f8f9fa"></div>
<div class="a" style="left:377px;top:866px;width:1148px;height:1px;background:#e5e7eb"></div>
<div class="a nw" style="left:393.5px;top:623.5px;font-size:18px;line-height:20px;font-weight:bold;color:#111827;transform:scaleX(.95);transform-origin:0 0">Pilihan Ekspor</div>
<div class="a" style="left:393px;top:660px;width:266px;height:189.5px;border:1px solid #e5e7eb;border-radius:8px;background:#f9fafb"></div>
<svg class="a" style="left:406px;top:676px" width="11" height="14" viewBox="0 0 12 14"><path d="M1.5 0H7.5L11.5 4V12.5A1.5 1.5 0 0 1 10 14H1.5A1.5 1.5 0 0 1 0 12.5V1.5A1.5 1.5 0 0 1 1.5 0Z" fill="#0f8a4c"/><path d="M7.5 0V4H11.5" fill="#8fd1ad"/><rect x="2" y="2" width="3" height="1.2" fill="#f8f9fa"/><rect x="2" y="4" width="3" height="1.2" fill="#f8f9fa"/><rect x="2" y="6.4" width="7.5" height="3" rx=".5" fill="none" stroke="#f8f9fa" stroke-width="1.1"/><rect x="6" y="11" width="3.5" height="1.2" fill="#f8f9fa"/></svg>
<div class="a nw" style="left:421.5px;top:674.5px;font-size:14px;line-height:16px;color:#1f2937;-webkit-text-stroke:.15px #1f2937">Export RAB</div>
<div class="a" style="left:406px;top:701px;width:16px;height:16px;border-radius:3px;background:#0f8a4c"></div>
<svg class="a" style="left:406px;top:701px" width="16" height="16" viewBox="0 0 16 16"><path d="M4.2 8.3L6.8 10.8 11.8 5.6" fill="none" stroke="#fff" stroke-width="1.9" stroke-linecap="round" stroke-linejoin="round"/></svg>
<div class="a nw" style="left:430.5px;top:703px;font-size:12.5px;line-height:14px;color:#1f2937;-webkit-text-stroke:.2px #1f2937;transform:scaleX(0.84);transform-origin:0 0">REKAP</div>
<div class="a" style="left:406px;top:725px;width:16px;height:16px;border-radius:3px;background:#0f8a4c"></div>
<svg class="a" style="left:406px;top:725px" width="16" height="16" viewBox="0 0 16 16"><path d="M4.2 8.3L6.8 10.8 11.8 5.6" fill="none" stroke="#fff" stroke-width="1.9" stroke-linecap="round" stroke-linejoin="round"/></svg>
<div class="a nw" style="left:430.5px;top:727px;font-size:12.5px;line-height:14px;color:#1f2937;-webkit-text-stroke:.2px #1f2937;transform:scaleX(0.88);transform-origin:0 0">RAB</div>
<div class="a" style="left:406px;top:749px;width:16px;height:16px;border-radius:3px;background:#0f8a4c"></div>
<svg class="a" style="left:406px;top:749px" width="16" height="16" viewBox="0 0 16 16"><path d="M4.2 8.3L6.8 10.8 11.8 5.6" fill="none" stroke="#fff" stroke-width="1.9" stroke-linecap="round" stroke-linejoin="round"/></svg>
<div class="a nw" style="left:430.5px;top:751px;font-size:12.5px;line-height:14px;color:#1f2937;-webkit-text-stroke:.2px #1f2937;transform:scaleX(0.9);transform-origin:0 0">AHSP</div>
<div class="a" style="left:406px;top:773px;width:16px;height:16px;border-radius:3px;background:#0f8a4c"></div>
<svg class="a" style="left:406px;top:773px" width="16" height="16" viewBox="0 0 16 16"><path d="M4.2 8.3L6.8 10.8 11.8 5.6" fill="none" stroke="#fff" stroke-width="1.9" stroke-linecap="round" stroke-linejoin="round"/></svg>
<div class="a nw" style="left:430.5px;top:775px;font-size:12.5px;line-height:14px;color:#1f2937;-webkit-text-stroke:.2px #1f2937;transform:scaleX(0.97);transform-origin:0 0">Upah</div>
<div class="a" style="left:406px;top:797px;width:16px;height:16px;border-radius:3px;background:#0f8a4c"></div>
<svg class="a" style="left:406px;top:797px" width="16" height="16" viewBox="0 0 16 16"><path d="M4.2 8.3L6.8 10.8 11.8 5.6" fill="none" stroke="#fff" stroke-width="1.9" stroke-linecap="round" stroke-linejoin="round"/></svg>
<div class="a nw" style="left:430.5px;top:799px;font-size:12.5px;line-height:14px;color:#1f2937;-webkit-text-stroke:.2px #1f2937;transform:scaleX(0.97);transform-origin:0 0">Bahan</div>
<div class="a" style="left:406px;top:821px;width:16px;height:16px;border-radius:3px;background:#0f8a4c"></div>
<svg class="a" style="left:406px;top:821px" width="16" height="16" viewBox="0 0 16 16"><path d="M4.2 8.3L6.8 10.8 11.8 5.6" fill="none" stroke="#fff" stroke-width="1.9" stroke-linecap="round" stroke-linejoin="round"/></svg>
<div class="a nw" style="left:430.5px;top:823px;font-size:12.5px;line-height:14px;color:#1f2937;-webkit-text-stroke:.2px #1f2937;transform:scaleX(0.97);transform-origin:0 0">Alat</div>
<div class="a" style="left:676px;top:660px;width:266px;height:189.5px;border:1px solid #e5e7eb;border-radius:8px;background:#f9fafb"></div>
<svg class="a" style="left:689px;top:676px" width="12" height="14" viewBox="0 0 12 14"><rect x="2.3" y="0" width="1.8" height="3" rx=".6" fill="#0f8a4c"/><rect x="7.9" y="0" width="1.8" height="3" rx=".6" fill="#0f8a4c"/><path d="M0 3.2A1.2 1.2 0 0 1 1.2 2H10.8A1.2 1.2 0 0 1 12 3.2V4.8H0Z" fill="#0f8a4c"/><path d="M0 5.6H12V12.8A1.2 1.2 0 0 1 10.8 14H1.2A1.2 1.2 0 0 1 0 12.8Z" fill="#0f8a4c"/></svg>
<div class="a nw" style="left:706px;top:674.5px;font-size:14px;line-height:16px;color:#1f2937;-webkit-text-stroke:.15px #1f2937">Export Time Schedule</div>
<div class="a" style="left:689px;top:701px;width:16px;height:16px;border-radius:3px;background:#0f8a4c"></div>
<svg class="a" style="left:689px;top:701px" width="16" height="16" viewBox="0 0 16 16"><path d="M4.2 8.3L6.8 10.8 11.8 5.6" fill="none" stroke="#fff" stroke-width="1.9" stroke-linecap="round" stroke-linejoin="round"/></svg>
<div class="a nw" style="left:713.5px;top:703px;font-size:12.5px;line-height:14px;color:#1f2937;-webkit-text-stroke:.2px #1f2937;transform:scaleX(0.97);transform-origin:0 0">Tabel</div>
<div class="a" style="left:689px;top:725px;width:16px;height:16px;border-radius:3px;background:#0f8a4c"></div>
<svg class="a" style="left:689px;top:725px" width="16" height="16" viewBox="0 0 16 16"><path d="M4.2 8.3L6.8 10.8 11.8 5.6" fill="none" stroke="#fff" stroke-width="1.9" stroke-linecap="round" stroke-linejoin="round"/></svg>
<div class="a nw" style="left:713.5px;top:727px;font-size:12.5px;line-height:14px;color:#1f2937;-webkit-text-stroke:.2px #1f2937;transform:scaleX(0.97);transform-origin:0 0">Gantt Chart</div>
<div class="a" style="left:959px;top:660px;width:266px;height:189.5px;border:1px solid #e5e7eb;border-radius:8px;background:#f9fafb"></div>
<svg class="a" style="left:972px;top:677px" width="15" height="13" viewBox="0 0 15 13"><path d="M.8 0V12.2H14.5" fill="none" stroke="#0f8a4c" stroke-width="1.4"/><path d="M3 9.5L6.3 5.5 8.8 7.8 13.8 2.5" fill="none" stroke="#0f8a4c" stroke-width="1.4" stroke-linejoin="round"/></svg>
<div class="a nw" style="left:990.5px;top:674.5px;font-size:14px;line-height:16px;color:#1f2937;-webkit-text-stroke:.15px #1f2937">Export Laporan Progres</div>
<div class="a" style="left:972px;top:701px;width:16px;height:16px;border-radius:3px;background:#0f8a4c"></div>
<svg class="a" style="left:972px;top:701px" width="16" height="16" viewBox="0 0 16 16"><path d="M4.2 8.3L6.8 10.8 11.8 5.6" fill="none" stroke="#fff" stroke-width="1.9" stroke-linecap="round" stroke-linejoin="round"/></svg>
<div class="a nw" style="left:996.5px;top:703px;font-size:12.5px;line-height:14px;color:#1f2937;-webkit-text-stroke:.2px #1f2937;transform:scaleX(0.97);transform-origin:0 0">Mingguan</div>
<div class="a" style="left:972px;top:725px;width:16px;height:16px;border-radius:3px;background:#0f8a4c"></div>
<svg class="a" style="left:972px;top:725px" width="16" height="16" viewBox="0 0 16 16"><path d="M4.2 8.3L6.8 10.8 11.8 5.6" fill="none" stroke="#fff" stroke-width="1.9" stroke-linecap="round" stroke-linejoin="round"/></svg>
<div class="a nw" style="left:996.5px;top:727px;font-size:12.5px;line-height:14px;color:#1f2937;-webkit-text-stroke:.2px #1f2937;transform:scaleX(0.97);transform-origin:0 0">Bulanan</div>
<div class="a" style="left:972px;top:749px;width:16px;height:16px;border-radius:3px;background:#0f8a4c"></div>
<svg class="a" style="left:972px;top:749px" width="16" height="16" viewBox="0 0 16 16"><path d="M4.2 8.3L6.8 10.8 11.8 5.6" fill="none" stroke="#fff" stroke-width="1.9" stroke-linecap="round" stroke-linejoin="round"/></svg>
<div class="a nw" style="left:996.5px;top:751px;font-size:12.5px;line-height:14px;color:#1f2937;-webkit-text-stroke:.2px #1f2937;transform:scaleX(0.97);transform-origin:0 0">Dokumentasi Foto</div>
<div class="a" style="left:1242px;top:660px;width:266px;height:189.5px;border:1px solid #e5e7eb;border-radius:8px;background:#f9fafb"></div>
<svg class="a" style="left:1255px;top:676px" width="14" height="14" viewBox="0 0 14 14"><path d="M1.2 0H7L10.5 3.5V7H3.5V14H1.2A1.2 1.2 0 0 1 0 12.8V1.2A1.2 1.2 0 0 1 1.2 0Z" fill="#0f8a4c"/><path d="M7 0V3.5H10.5" fill="#8fd1ad"/><text x="4" y="13.6" font-size="5.2" font-weight="bold" font-family="Liberation Sans" fill="#0f8a4c">PDF</text></svg>
<div class="a nw" style="left:1273px;top:674.5px;font-size:14px;line-height:16px;color:#1f2937;-webkit-text-stroke:.15px #1f2937">Lainnya</div>
<div class="a" style="left:1255px;top:701px;width:16px;height:16px;border-radius:3px;background:#0f8a4c"></div>
<svg class="a" style="left:1255px;top:701px" width="16" height="16" viewBox="0 0 16 16"><path d="M4.2 8.3L6.8 10.8 11.8 5.6" fill="none" stroke="#fff" stroke-width="1.9" stroke-linecap="round" stroke-linejoin="round"/></svg>
<div class="a nw" style="left:1279.5px;top:703px;font-size:12.5px;line-height:14px;color:#1f2937;-webkit-text-stroke:.2px #1f2937;transform:scaleX(0.97);transform-origin:0 0">Volume Calc</div>
<div class="a" style="left:1255px;top:725px;width:16px;height:16px;border-radius:3px;background:#0f8a4c"></div>
<svg class="a" style="left:1255px;top:725px" width="16" height="16" viewBox="0 0 16 16"><path d="M4.2 8.3L6.8 10.8 11.8 5.6" fill="none" stroke="#fff" stroke-width="1.9" stroke-linecap="round" stroke-linejoin="round"/></svg>
<div class="a nw" style="left:1279.5px;top:727px;font-size:12.5px;line-height:14px;color:#1f2937;-webkit-text-stroke:.2px #1f2937;transform:scaleX(0.97);transform-origin:0 0">Breakdown</div>
<div class="a" style="left:651px;top:883px;width:90px;height:40px;border-radius:6px;background:#6b7280"></div>
<svg class="a" style="left:667px;top:895px" width="15" height="15" viewBox="0 0 15 15"><circle cx="7.5" cy="7.5" r="7.3" fill="#fff"/><path d="M5.6 5.6l3.8 3.8M9.4 5.6L5.6 9.4" stroke="#6b7280" stroke-width="1.1"/></svg>
<div class="a nw" style="left:689px;top:895px;font-size:14px;line-height:16px;color:#fff;-webkit-text-stroke:.2px #fff;transform:scaleX(.96);transform-origin:0 0">Tutup</div>
<div class="a" style="left:749px;top:883px;width:145px;height:40px;border-radius:6px;background:#0b8a4f"></div>
<svg class="a" style="left:765px;top:895px" width="15" height="15" viewBox="0 0 15 15"><path d="M7.5 0V8" stroke="#fff" stroke-width="2.2"/><path d="M3.4 5.2L7.5 9.3 11.6 5.2z" fill="#fff"/><path d="M0 10.5H4.5L7.5 12.5 10.5 10.5H15V14A1 1 0 0 1 14 15H1A1 1 0 0 1 0 14z" fill="#fff"/></svg>
<div class="a nw" style="left:787px;top:895px;font-size:14px;line-height:16px;color:#fff;-webkit-text-stroke:.2px #fff;transform:scaleX(.96);transform-origin:0 0">Download PDF</div>
<div class="a" style="left:902px;top:883px;width:178px;height:40px;border-radius:6px;background:#0b8a4f"></div>
<svg class="a" style="left:919px;top:895px" width="11" height="15" viewBox="0 0 11 15"><path d="M1 0H7L11 4V14A1 1 0 0 1 10 15H1A1 1 0 0 1 0 14V1A1 1 0 0 1 1 0Z" fill="#fff"/><path d="M3.3 7.3l4.2 5M7.5 7.3l-4.2 5" stroke="#0b8a4f" stroke-width="1"/></svg>
<div class="a nw" style="left:937px;top:895px;font-size:14px;line-height:16px;color:#fff;-webkit-text-stroke:.2px #fff;transform:scaleX(.96);transform-origin:0 0">Excel dengan Rumus</div>
<div class="a" style="left:1088px;top:883px;width:163px;height:40px;border-radius:6px;background:#0b8a4f"></div>
<svg class="a" style="left:1105px;top:895px" width="11" height="15" viewBox="0 0 11 15"><path d="M1 0H7L11 4V14A1 1 0 0 1 10 15H1A1 1 0 0 1 0 14V1A1 1 0 0 1 1 0Z" fill="#fff"/><path d="M3.3 7.3l4.2 5M7.5 7.3l-4.2 5" stroke="#0b8a4f" stroke-width="1"/></svg>
<div class="a nw" style="left:1123px;top:895px;font-size:14px;line-height:16px;color:#fff;-webkit-text-stroke:.2px #fff;transform:scaleX(.96);transform-origin:0 0">Excel tanpa rumus</div>
<svg class="a" style="left:1316px;top:782px" width="13" height="20" viewBox="0 0 13 20"><path d="M1 1V15.5L4.6 12.2 7.2 18.3 9.4 17.3 6.9 11.4H11.8Z" fill="#fff" stroke="#000" stroke-width="1" stroke-linejoin="round"/></svg>
</body></html>
